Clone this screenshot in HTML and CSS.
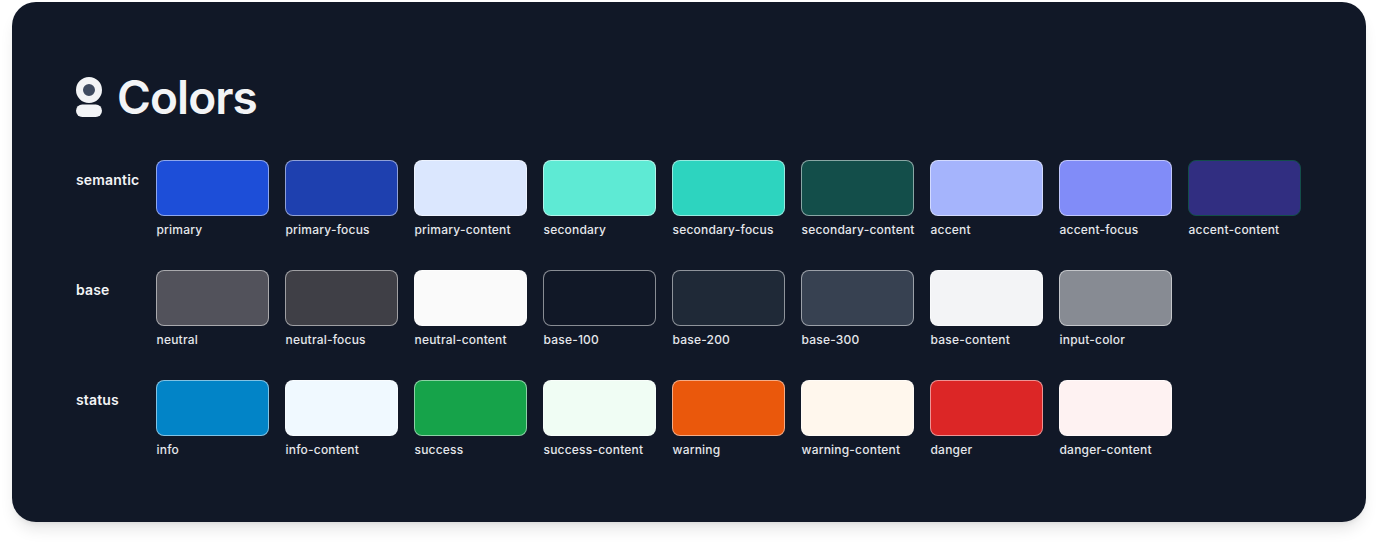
FILE: index.html
```html
<!DOCTYPE html>
<html lang="en">
<head>
<meta charset="utf-8">
<title>Colors</title>
<link rel="stylesheet" href="styles.css">
</head>
<body>
<main class="card">
  <h1 class="title">
    <svg class="logo" width="26" height="40" viewBox="0 0 26 40" aria-hidden="true">
      <circle cx="13" cy="13" r="9.5" fill="#3f4b60" stroke="#f3f4f6" stroke-width="7"/>
      <rect x="0" y="27.5" width="26" height="12.5" rx="6.25" fill="#f3f4f6"/>
    </svg>
    Colors
  </h1>
  <section class="group">
    <h2 class="group-name">semantic</h2>
    <div class="swatches">
      <figure class="item"><div class="swatch c-primary"></div><figcaption>primary</figcaption></figure>
      <figure class="item"><div class="swatch c-primary-focus"></div><figcaption>primary-focus</figcaption></figure>
      <figure class="item"><div class="swatch c-primary-content"></div><figcaption>primary-content</figcaption></figure>
      <figure class="item"><div class="swatch c-secondary"></div><figcaption>secondary</figcaption></figure>
      <figure class="item"><div class="swatch c-secondary-focus"></div><figcaption>secondary-focus</figcaption></figure>
      <figure class="item"><div class="swatch c-secondary-content"></div><figcaption>secondary-content</figcaption></figure>
      <figure class="item"><div class="swatch c-accent"></div><figcaption>accent</figcaption></figure>
      <figure class="item"><div class="swatch c-accent-focus"></div><figcaption>accent-focus</figcaption></figure>
      <figure class="item"><div class="swatch c-accent-content"></div><figcaption>accent-content</figcaption></figure>
    </div>
  </section>
  <section class="group">
    <h2 class="group-name">base</h2>
    <div class="swatches">
      <figure class="item"><div class="swatch c-neutral"></div><figcaption>neutral</figcaption></figure>
      <figure class="item"><div class="swatch c-neutral-focus"></div><figcaption>neutral-focus</figcaption></figure>
      <figure class="item"><div class="swatch c-neutral-content"></div><figcaption>neutral-content</figcaption></figure>
      <figure class="item"><div class="swatch c-base-100"></div><figcaption>base-100</figcaption></figure>
      <figure class="item"><div class="swatch c-base-200"></div><figcaption>base-200</figcaption></figure>
      <figure class="item"><div class="swatch c-base-300"></div><figcaption>base-300</figcaption></figure>
      <figure class="item"><div class="swatch c-base-content"></div><figcaption>base-content</figcaption></figure>
      <figure class="item"><div class="swatch c-input"></div><figcaption>input-color</figcaption></figure>
    </div>
  </section>
  <section class="group">
    <h2 class="group-name">status</h2>
    <div class="swatches">
      <figure class="item"><div class="swatch c-info"></div><figcaption>info</figcaption></figure>
      <figure class="item"><div class="swatch c-info-content"></div><figcaption>info-content</figcaption></figure>
      <figure class="item"><div class="swatch c-success"></div><figcaption>success</figcaption></figure>
      <figure class="item"><div class="swatch c-success-content"></div><figcaption>success-content</figcaption></figure>
      <figure class="item"><div class="swatch c-warning"></div><figcaption>warning</figcaption></figure>
      <figure class="item"><div class="swatch c-warning-content"></div><figcaption>warning-content</figcaption></figure>
      <figure class="item"><div class="swatch c-danger"></div><figcaption>danger</figcaption></figure>
      <figure class="item"><div class="swatch c-danger-content"></div><figcaption>danger-content</figcaption></figure>
    </div>
  </section>
</main>
</body>
</html>
```

FILE: styles.css
```css
* { box-sizing: border-box; }
html, body { margin: 0; background: #fff; }
body { padding: 2px 12px 22px; font-family: Inter, "Liberation Sans", sans-serif; overflow: hidden; }
.card {
  height: 520px;
  background: #111827;
  border-radius: 24px;
  padding: 75px 64px 0;
  box-shadow: 0 10px 15px -3px rgba(0,0,0,.1), 0 4px 6px -4px rgba(0,0,0,.1);
}
.title {
  display: flex;
  align-items: center;
  gap: 15px;
  margin: 0 0 43px;
  height: 40px;
  font-size: 46px;
  line-height: 40px;
  font-weight: 600;
  letter-spacing: -0.02em;
  color: #f3f4f6;
}
.logo { flex: none; }
.group { display: flex; height: 110px; }
.group-name {
  width: 80px;
  margin: 0;
  font-size: 14px;
  line-height: 20px;
  padding-top: 10px;
  font-weight: 600;
  letter-spacing: 0.012em;
  color: #f3f4f6;
}
.swatches { display: flex; gap: 16px; }
.item { width: 113px; margin: 0; }
.swatch {
  height: 56px;
  border-radius: 8px;
  border: 1px solid rgba(255,255,255,.5);
}
.item figcaption {
  margin-top: 6px;
  padding-left: 0.5px;
  font-size: 12px;
  line-height: 16px;
  font-weight: 500;
  letter-spacing: 0.017em;
  color: #e5e7eb;
  white-space: nowrap;
}
.c-primary { background: #1d4ed8; }
.c-primary-focus { background: #1e40af; }
.c-primary-content { background: #dbe7fe; }
.c-secondary { background: #5eead4; }
.c-secondary-focus { background: #2dd4bf; }
.c-secondary-content { background: #134e4a; }
.c-accent { background: #a5b4fc; }
.c-accent-focus { background: #818cf8; }
.c-accent-content { background: #312e81; border-color: #134e4a; }
.c-neutral { background: #52525b; }
.c-neutral-focus { background: #3f3f46; }
.c-neutral-content { background: #fafafa; }
.c-base-100 { background: #111827; }
.c-base-200 { background: #1f2937; }
.c-base-300 { background: #374151; }
.c-base-content { background: #f3f4f6; }
.c-input { background: #878b93; }
.c-info { background: #0284c7; }
.c-info-content { background: #f0f9ff; }
.c-success { background: #16a34a; }
.c-success-content { background: #f0fdf4; }
.c-warning { background: #ea580c; }
.c-warning-content { background: #fff7ed; }
.c-danger { background: #dc2626; }
.c-danger-content { background: #fef2f2; }
```
